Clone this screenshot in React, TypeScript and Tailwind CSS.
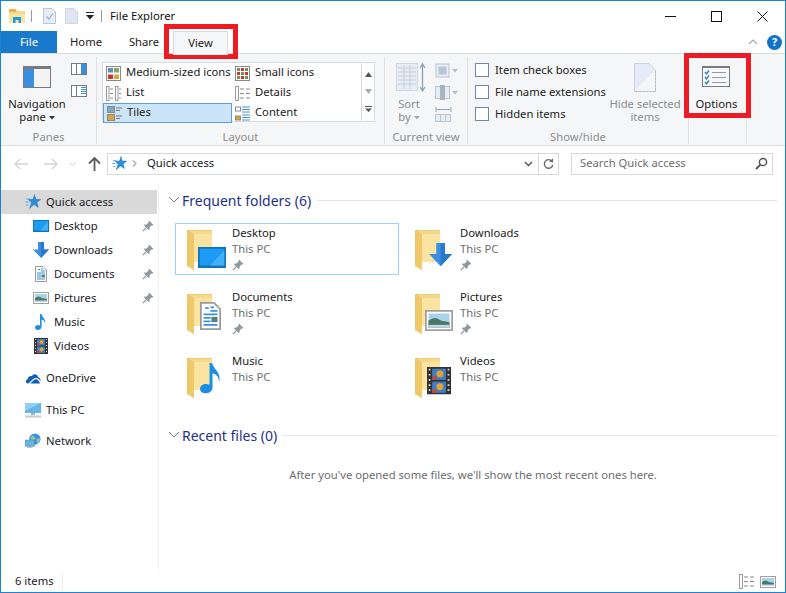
import React from "react";

const font = "[font-family:'Noto_Sans','Open_Sans',sans-serif]";

const Pin = () => (
  <svg width="12" height="12" viewBox="0 0 12 12">
    <path d="M7 0.5 L11.5 5 L10.5 5.6 L9.8 5.2 L7.6 7.4 L7.6 9.4 L6.6 10 L2 5.4 L2.6 4.4 L4.6 4.4 L6.8 2.2 L6.4 1.5 Z" fill="#8f979d" />
    <path d="M4 8 L0.8 11.2" stroke="#8f979d" strokeWidth="1.2" />
  </svg>
);

const Star = ({ s = 16 }: { s?: number }) => (
  <svg width={s} height={s} viewBox="0 0 16 16">
    <path d="M1 5 H5 M0 8 H3.5 M1 11 H3.5" stroke="#5aa9e6" strokeWidth="1" />
    <path d="M9.5 0.5 L11 5.3 L15.8 5.4 L12 8.4 L13.3 13.4 L9 10.6 L4.4 14.8 L6.4 8.8 L3.2 5.6 L8 5.3 Z" fill="#2b8fdc" stroke="#1b6fb5" strokeWidth="0.4" />
  </svg>
);

const DesktopIcon = () => (
  <svg width="16" height="12" viewBox="0 0 16 12">
    <rect x="0" y="0" width="16" height="12" fill="#0f74b8" />
    <rect x="1" y="1" width="14" height="9.5" fill="#1e9bf5" />
    <path d="M7 10.5 L15 2 V10.5 Z" fill="#46b0f7" />
  </svg>
);

const DownArrow = () => (
  <svg width="16" height="16" viewBox="0 0 16 16">
    <path d="M5 0 H11 V7.5 H16 L8 16 L0 7.5 H5 Z" fill="#3b8fe0" />
    <path d="M8 0 H11 V7.5 H16 L8 16 Z" fill="#2a78cc" />
  </svg>
);

const DocIcon = () => (
  <svg width="12" height="16" viewBox="0 0 12 16">
    <path d="M0.5 0.5 H8 L11.5 4 V15.5 H0.5 Z" fill="#fff" stroke="#9a9a9a" />
    <path d="M3 3.5 H5 M6 3 H8 M6 5 H10 M2 7 H10 M2 9 H6 M2 11 H6 M2 13 H10" stroke="#3a90dc" strokeWidth="1" />
    <rect x="6.5" y="8.5" width="3.5" height="3" fill="#5b7f7a" />
  </svg>
);

const PicIcon = () => (
  <svg width="16" height="12" viewBox="0 0 16 12">
    <rect x="0.5" y="0.5" width="15" height="11" fill="#fff" stroke="#a0a0a0" />
    <rect x="2" y="2" width="12" height="8" fill="#a9d3ec" />
    <path d="M2 6 Q6 3 9 6 L14 7 V10 H2 Z" fill="#4d7868" />
    <path d="M2 8.5 H14 V10 H2 Z" fill="#bcd8e6" />
  </svg>
);

const Note = ({ s = 16 }: { s?: number }) => (
  <svg width={s * 0.75} height={s} viewBox="0 0 12 16">
    <path d="M5 0 H6.4 C6.8 3 11.5 5 10 10 C10 7 8.5 6 6.6 5.4 V12.6 C6.6 14.8 4.8 16 3 16 C1.2 16 0 15 0 13.6 C0 12 1.6 11 3 11 C3.8 11 4.5 11.2 5 11.5 Z" fill="#1a8fe3" />
  </svg>
);

const Film = () => (
  <svg width="14" height="16" viewBox="0 0 14 16">
    <rect width="14" height="16" fill="#333" />
    <path d="M1 1.5 H2 M1 4.5 H2 M1 7.5 H2 M1 10.5 H2 M1 13.5 H2 M12 1.5 H13 M12 4.5 H13 M12 7.5 H13 M12 10.5 H13 M12 13.5 H13" stroke="#ddd" />
    <rect x="3" y="1" width="8" height="6.5" fill="#3c7fc8" />
    <rect x="3" y="8.5" width="8" height="6.5" fill="#3c7fc8" />
    <circle cx="7.5" cy="4" r="2" fill="#e8a22b" />
    <circle cx="7.5" cy="11.5" r="2" fill="#e8a22b" />
    <path d="M3 6 L5.5 5 V7.5 H3 Z M3 13.5 L5.5 12.5 V15 H3 Z" fill="#c9483a" />
  </svg>
);

const Cloud = () => (
  <svg width="16" height="11" viewBox="0 0 16 11">
    <path d="M3.5 10.5 C0.5 10.5 0 7 2.6 6.2 C3 3 6 2.4 7 3.2 C8 0.6 12.4 0.6 13 4.2 C15 4.6 16 6.6 15.4 8 C14.4 6 12 4.6 9.6 5.2 C7.4 5.8 6.4 8 3.5 10.5 Z" fill="#0f5fb8" />
    <path d="M5 10.5 C7 9.4 8 6.6 10.4 6.2 C12.4 6 14.4 7.6 15 10.5 Z" fill="#0f5fb8" />
  </svg>
);

const Monitor = () => (
  <svg width="16" height="15" viewBox="0 0 16 15">
    <rect x="0" y="0" width="16" height="10" fill="#64b5e8" />
    <path d="M0 0 H16 L0 8 Z" fill="#8fd0f3" />
    <rect x="6" y="10" width="4" height="2" fill="#9fb4c2" />
    <rect x="0" y="12.5" width="16" height="2" fill="#c4ccd2" />
  </svg>
);

const Globe = () => (
  <svg width="17" height="16" viewBox="0 0 17 16">
    <circle cx="10.5" cy="6" r="6" fill="#3f92dc" />
    <path d="M7 2 Q11 3 11 6 Q8 8 6 6 Z M12 6 L16 5 Q16 9 13 11 Z" fill="#8fc7a0" />
    <rect x="0" y="7" width="10" height="6.5" fill="#64b5e8" stroke="#5a7d99" strokeWidth="0.6" />
    <rect x="3.5" y="13.5" width="3" height="1" fill="#8096a5" />
    <rect x="2" y="14.5" width="6" height="1" fill="#b7c2ca" />
  </svg>
);

const NavRow = ({ icon, label, pin, active, child }: { icon: React.ReactNode; label: string; pin?: boolean; active?: boolean; child?: boolean }) => (
  <div className={`flex h-6 w-[156px] items-center ${active ? "bg-[#d9d9d9]" : ""} ${child ? "pl-[32px]" : "pl-[24px]"}`}>
    <div className="flex w-[16px] shrink-0 items-center justify-center">{icon}</div>
    <span className="ml-[5px] text-[#1a1a2a]">{label}</span>
    {pin && (
      <div className="mr-[3px] ml-auto">
        <Pin />
      </div>
    )}
  </div>
);

const Folder = ({ children }: { children?: React.ReactNode }) => (
  <div className="relative h-[40px] w-[40px] shrink-0">
    <svg width="26" height="40" viewBox="0 0 26 40">
      <path d="M0 0 H25 V32 H7 V40 L0 36 Z" fill="#f6d98a" />
      <path d="M7 4 H25 V32 H7 Z" fill="#fbe4a1" />
      <path d="M0 0 L7 4 V40 L0 36 Z" fill="#efc868" />
      <path d="M0 0 H25 V1 H1 V36 H0 Z" fill="#e7c873" />
    </svg>
    {/* overlay glyph */}
    <div className="absolute top-[14px] left-[10px]">{children}</div>
  </div>
);

const Tile = ({ title, pin, selected, overlay }: { title: string; pin?: boolean; selected?: boolean; overlay: React.ReactNode }) => (
  <div className={`flex h-[52px] w-[224px] items-start border pt-[6px] pl-[11px] ${selected ? "border-[#99d1ff]" : "border-transparent"}`}>
    <Folder>{overlay}</Folder>
    <div className="-mt-[5px] ml-[5px] flex flex-col leading-[16px]">
      <span className="text-[#1a1a1a]">{title}</span>
      <span className="text-[#6d6d6d]">This PC</span>
      {pin && (
        <div className="mt-[2px]">
          <Pin />
        </div>
      )}
    </div>
  </div>
);

const Section = ({ title }: { title: string }) => (
  <div className="flex h-[20px] items-center">
    <svg width="12" height="8" viewBox="0 0 12 8" className="ml-[7px]">
      <path d="M1 1 L6 6 L11 1" fill="none" stroke="#7a7a7a" />
    </svg>
    <span className="ml-[2px] text-[14px] text-[#1e3287]">{title}</span>
    <div className="mr-[8px] ml-[6px] h-px flex-1 bg-[#e3e3e3]" />
  </div>
);

const Thumb = ({ kind }: { kind: string }) => {
  if (kind === "medium")
    return (
      <svg width="15" height="15" viewBox="0 0 15 15">
        <rect x="0.5" y="0.5" width="14" height="14" fill="#fff" stroke="#8a8a8a" />
        <rect x="2" y="2" width="5" height="4.5" fill="#5b8fb8" />
        <rect x="8" y="2" width="5" height="4.5" fill="#7fa96a" />
        <rect x="2" y="8.5" width="5" height="4.5" fill="#c0392b" />
        <rect x="8" y="8.5" width="5" height="4.5" fill="#d9a441" />
      </svg>
    );
  if (kind === "small")
    return (
      <svg width="15" height="15" viewBox="0 0 15 15">
        <rect x="0.5" y="0.5" width="14" height="14" fill="#fff" stroke="#8a8a8a" />
        {[2, 6, 10].map((y) =>
          [2, 6, 10].map((x) => <rect key={`${x}-${y}`} x={x} y={y} width="3" height="3" fill={(x + y) % 8 === 0 ? "#c0392b" : "#7d8a60"} />)
        )}
      </svg>
    );
  if (kind === "list")
    return (
      <svg width="15" height="15" viewBox="0 0 15 15">
        <rect x="0.5" y="0.5" width="2.5" height="14" fill="#fff" stroke="#9a9a9a" />
        <rect x="9.5" y="0.5" width="2.5" height="14" fill="#fff" stroke="#9a9a9a" />
        <path d="M4 3 H7 M4 7.5 H7 M4 12 H7 M13 3 H15 M13 7.5 H15 M13 12 H15" stroke="#8a8a8a" />
      </svg>
    );
  if (kind === "details")
    return (
      <svg width="15" height="15" viewBox="0 0 15 15">
        <rect x="0.5" y="0.5" width="3" height="14" fill="#fff" stroke="#9a9a9a" />
        <path d="M5 3 H9 M11 3 H15 M5 7.5 H9 M11 7.5 H15 M5 12 H9 M11 12 H15" stroke="#8a8a8a" />
      </svg>
    );
  if (kind === "tiles")
    return (
      <svg width="16" height="15" viewBox="0 0 16 15">
        <rect x="0.5" y="0.5" width="7" height="6" fill="#7ba7c7" stroke="#8a8a8a" />
        <rect x="0.5" y="8.5" width="7" height="6" fill="#d9a441" stroke="#8a8a8a" />
        <path d="M9 2 H15 M9 4.5 H13 M9 10 H15 M9 12.5 H13" stroke="#777" />
      </svg>
    );
  return (
    <svg width="15" height="15" viewBox="0 0 15 15">
      <rect x="0.5" y="1" width="5" height="4" fill="#fff" stroke="#8a8a8a" />
      <rect x="0.5" y="10" width="5" height="4" fill="#d9a441" stroke="#8a8a8a" />
      <path d="M7 1 H15 M7 3.5 H15 M7 6 H15 M7 9 H15 M7 11.5 H15 M7 14 H15" stroke="#4a8fd0" />
    </svg>
  );
};

const GalleryItem = ({ kind, label, selected }: { kind: string; label: string; selected?: boolean }) => (
  <div className={`flex h-[20px] items-center pl-[2px] ${selected ? "border border-[#5f9fd8] bg-[#cce4f7]" : ""}`}>
    <div className="flex w-[17px] shrink-0 justify-center">
      <Thumb kind={kind} />
    </div>
    <span className="ml-[4px] pb-[2px] whitespace-nowrap text-[#222]">{label}</span>
  </div>
);

const Group = ({ w, label, children }: { w: string; label: string; children: React.ReactNode }) => (
  <div className={`flex h-full shrink-0 flex-col border-r border-[#e1e2e3] ${w}`}>
    <div className="relative flex-1">{children}</div>
    <div className="h-[18px] text-center leading-[22px] text-[#8d8d8d]">{label}</div>
  </div>
);

const Check = ({ label }: { label: string }) => (
  <div className="flex h-[14px] items-center">
    <div className="h-[14px] w-[14px] border border-[#6f86ad] bg-white" />
    <span className="ml-[6px] whitespace-nowrap text-[#222]">{label}</span>
  </div>
);

const Caret = ({ c = "#333" }: { c?: string }) => (
  <svg width="6" height="4" viewBox="0 0 6 4" className="ml-[3px] inline-block align-middle">
    <path d="M0 0 H6 L3 3.5 Z" fill={c} />
  </svg>
);

export default function App() {
  return (
    <div className={`relative flex h-[593px] w-[786px] flex-col overflow-hidden border border-[#1a84d8] bg-white text-[11.25px] ${font}`}>
      {/* title bar */}
      <div className="flex h-[30px] shrink-0 items-center">
        <div className="ml-[7px]">
          <svg width="18" height="16" viewBox="0 0 18 16">
            <path d="M1 1 H8 L10 3 H17 V15 H1 Z" fill="#f6d98a" />
            <path d="M1 1 H8 V4 H1 Z" fill="#e7b64e" />
            <rect x="1" y="6" width="16" height="9" fill="#fbe4a1" />
            <path d="M5 15 V9 H13 V15 H10.5 V12 H7.5 V15 Z" fill="#1d9be0" />
          </svg>
        </div>
        <div className="ml-[5px] h-[12px] w-px bg-[#9a9a9a]" />
        <div className="ml-[11px]">
          <svg width="13" height="16" viewBox="0 0 13 16">
            <path d="M0.5 0.5 H9 L12.5 4 V15.5 H0.5 Z" fill="#e6edf7" stroke="#b6c4d9" />
            <path d="M3.5 8.5 L6 11 L10 5.5" fill="none" stroke="#9aa9bd" strokeWidth="1.2" />
          </svg>
        </div>
        <div className="ml-[9px]">
          <svg width="13" height="16" viewBox="0 0 13 16">
            <path d="M0.5 0.5 H9 L12.5 4 V15.5 H0.5 Z" fill="#dfe6f2" stroke="#ccd6e6" />
          </svg>
        </div>
        <div className="ml-[8px]">
          <svg width="8" height="8" viewBox="0 0 8 8">
            <path d="M0 0 H8 V1 H0 Z M0 3 H8 L4 7.5 Z" fill="#222" />
          </svg>
        </div>
        <div className="ml-[7px] h-[12px] w-px bg-[#9a9a9a]" />
        <span className="ml-[8px] text-[#111]">File Explorer</span>
        <div className="mr-[17px] ml-auto flex items-center gap-[35px]">
          <svg width="11" height="11" viewBox="0 0 11 11">
            <path d="M0 5.5 H11" stroke="#111" />
          </svg>
          <svg width="11" height="11" viewBox="0 0 11 11">
            <rect x="0.5" y="0.5" width="10" height="10" fill="none" stroke="#111" />
          </svg>
          <svg width="11" height="11" viewBox="0 0 11 11">
            <path d="M0.5 0.5 L10.5 10.5 M10.5 0.5 L0.5 10.5" stroke="#111" />
          </svg>
        </div>
      </div>

      {/* tabs */}
      <div className="flex h-[23px] shrink-0 items-stretch border-b border-[#dadbdc]">
        <div className="flex w-[56px] items-center justify-center bg-[#1979ca] text-white">File</div>
        <div className="flex w-[58px] items-center justify-center text-[#222]">Home</div>
        <div className="flex w-[58px] items-center justify-center text-[#222]">Share</div>
        <div className="z-10 flex h-[24px] w-[55px] items-center justify-center border-x border-t border-[#dadbdc] bg-[#f5f6f7] text-[#222]">View</div>
        <div className="mr-[3px] ml-auto flex items-center gap-[9px]">
          <svg width="10" height="6" viewBox="0 0 10 6">
            <path d="M1 5 L5 1 L9 5" fill="none" stroke="#a8a8a8" strokeWidth="1.2" />
          </svg>
          <div className="flex h-[15px] w-[15px] items-center justify-center rounded-full bg-[#0f74c8] text-[11px] font-bold text-white">?</div>
        </div>
      </div>

      {/* ribbon */}
      <div className="flex h-[92px] shrink-0 border-b border-[#dadbdc] bg-[#f5f6f7] pt-[3px] pb-[1px]">
        <Group w="w-[96px]" label="Panes">
          <div className="absolute top-[9px] left-[22px]">
            <svg width="28" height="22" viewBox="0 0 28 22">
              <rect width="28" height="22" fill="#7a7a7a" />
              <rect x="1" y="3" width="26" height="18" fill="#f4f4f4" />
              <rect x="1" y="3" width="10" height="18" fill="#3b8fe0" />
            </svg>
          </div>
          <div className="absolute top-[40px] left-0 w-[72px] text-center leading-[13px] text-[#222]">
            Navigation
            <br />
            pane
            <Caret />
          </div>
          <div className="absolute top-[6px] left-[70px]">
            <svg width="16" height="12" viewBox="0 0 16 12">
              <rect x="0.5" y="0.5" width="15" height="11" fill="#fff" stroke="#7a7a7a" />
              <rect x="5" y="1" width="1" height="10" fill="#7a7a7a" />
              <rect x="10" y="1" width="5" height="10" fill="#3b8fe0" />
            </svg>
          </div>
          <div className="absolute top-[28px] left-[70px]">
            <svg width="16" height="12" viewBox="0 0 16 12">
              <rect x="0.5" y="0.5" width="15" height="11" fill="#fff" stroke="#7a7a7a" />
              <rect x="5" y="1" width="1" height="10" fill="#7a7a7a" />
              <path d="M10 2.5 H15 M10 4.5 H15 M10 6.5 H15 M10 8.5 H15" stroke="#3b8fe0" />
            </svg>
          </div>
        </Group>

        <Group w="w-[288px]" label="Layout">
          <div className="absolute top-[5px] left-[5px] flex h-[60px] w-[273px] border border-[#dadbdc] bg-white">
            <div className="grid w-[258px] grid-cols-[129px_129px] grid-rows-[20px_20px_20px]">
              <GalleryItem kind="medium" label="Medium-sized icons" />
              <GalleryItem kind="small" label="Small icons" />
              <GalleryItem kind="list" label="List" />
              <GalleryItem kind="details" label="Details" />
              <GalleryItem kind="tiles" label="Tiles" selected />
              <GalleryItem kind="content" label="Content" />
            </div>
            <div className="flex flex-1 flex-col items-center justify-around border-l border-[#dadbdc] py-[3px]">
              <svg width="7" height="5" viewBox="0 0 7 5"><path d="M0 5 L3.5 0 L7 5 Z" fill="#555" /></svg>
              <svg width="7" height="5" viewBox="0 0 7 5"><path d="M0 0 L3.5 5 L7 0 Z" fill="#aaa" /></svg>
              <svg width="7" height="6" viewBox="0 0 7 6"><path d="M0 0 H7 V1 H0 Z M0 2.5 H7 L3.5 6 Z" fill="#555" /></svg>
            </div>
          </div>
        </Group>

        <Group w="w-[83px]" label="Current view">
          <div className="absolute top-[6px] left-[11px]">
            <svg width="31" height="29" viewBox="0 0 31 29">
              <rect x="0.5" y="0.5" width="21" height="27" fill="#e8edf4" stroke="#cfd6e0" />
              <path d="M2 5 H20 M2 9 H20 M2 13 H20 M2 17 H20 M2 21 H20 M8 2 V26 M14 2 V26" stroke="#c3cfe0" />
              <path d="M26.5 2 V27 M24 5 L26.5 1 L29 5 M24 24 L26.5 28 L29 24" fill="none" stroke="#8ba0bd" strokeWidth="1.3" />
            </svg>
          </div>
          <div className="absolute top-[40px] left-[10px] w-[28px] text-center leading-[13px] text-[#8d8d8d]">
            Sort
            <br />
            by
            <Caret c="#aaa" />
          </div>
          <div className="absolute top-[6px] left-[50px] flex flex-col gap-[7px]">
            <svg width="23" height="15" viewBox="0 0 23 15">
              <rect x="1" y="1" width="13" height="13" fill="#e8edf4" stroke="#bcc5d2" />
              <rect x="3.5" y="3.5" width="8" height="8" fill="#b9c5d6" />
              <path d="M17 6 H23 L20 9.5 Z" fill="#bbb" />
            </svg>
            <svg width="23" height="15" viewBox="0 0 23 15">
              <rect x="0.5" y="1.5" width="14" height="12" fill="#e8edf4" stroke="#bcc5d2" />
              <rect x="5" y="0" width="5" height="15" fill="#a9b4c3" />
              <path d="M17 6 H23 L20 9.5 Z" fill="#bbb" />
            </svg>
            <svg width="17" height="15" viewBox="0 0 17 15">
              <path d="M1 0 V5 M16 0 V5 M2 2.5 H15" stroke="#8ba0bd" />
              <rect x="0.5" y="7.5" width="15" height="7" fill="#e8edf4" stroke="#bcc5d2" />
              <path d="M5.5 8 V14 M10.5 8 V14" stroke="#bcc5d2" />
            </svg>
          </div>
        </Group>

        <Group w="w-[221px]" label="Show/hide">
          <div className="absolute top-[6px] left-[7px] flex flex-col gap-[8px]">
            <Check label="Item check boxes" />
            <Check label="File name extensions" />
            <Check label="Hidden items" />
          </div>
          <div className="absolute top-[6px] left-[166px]">
            <svg width="22" height="29" viewBox="0 0 22 29">
              <path d="M0.5 0.5 H15 L21.5 7 V28.5 H0.5 Z" fill="#e4ecf8" stroke="#c6d2e4" />
              <path d="M1 28 L21 7 V28 Z" fill="#f5f6f7" />
              <path d="M21.5 8 V28.5 H1" fill="none" stroke="#b9b9b9" strokeDasharray="2 1.5" />
            </svg>
          </div>
          <div className="absolute top-[40px] left-[133px] w-[88px] text-center leading-[13px] text-[#8d8d8d]">
            Hide selected
            <br />
            items
          </div>
        </Group>

        <Group w="w-[58px]" label="">
          <div className="absolute top-[9px] left-[13px]">
            <svg width="28" height="21" viewBox="0 0 28 21">
              <rect x="0.5" y="0.5" width="27" height="20" fill="#f7f7f7" stroke="#7a7a7a" />
              <rect x="0" y="0" width="28" height="2" fill="#7a7a7a" />
              <path d="M3 6 L4.5 8 L7 4.5 M3 11 L4.5 13 L7 9.5 M3 16 L4.5 18 L7 14.5" fill="none" stroke="#2b7fd0" strokeWidth="1.3" />
              <path d="M10 6.5 H24 M10 11.5 H24 M10 16.5 H24" stroke="#9a9a9a" />
            </svg>
          </div>
          <div className="absolute top-[40px] -left-[1px] w-full text-center leading-[13px] text-[#222]">Options</div>
        </Group>
      </div>

      {/* address bar */}
      <div className="flex h-[38px] shrink-0 items-center pb-[3px]">
        <div className="ml-[13px] flex items-center">
          <svg width="14" height="12" viewBox="0 0 14 12">
            <path d="M6 1 L1 6 L6 11 M1 6 H14" fill="none" stroke="#d2d2d2" strokeWidth="1.4" />
          </svg>
          <svg width="14" height="12" viewBox="0 0 14 12" className="ml-[16px]">
            <path d="M8 1 L13 6 L8 11 M0 6 H13" fill="none" stroke="#d2d2d2" strokeWidth="1.4" />
          </svg>
          <svg width="7" height="4" viewBox="0 0 7 4" className="ml-[11px]">
            <path d="M0.5 0.5 L3.5 3.5 L6.5 0.5" fill="none" stroke="#d2d2d2" />
          </svg>
          <svg width="13" height="14" viewBox="0 0 13 14" className="ml-[12px]">
            <path d="M1 6.5 L6.5 1 L12 6.5 M6.5 1 V14" fill="none" stroke="#5a5a5a" strokeWidth="1.8" />
          </svg>
        </div>
        <div className="ml-[6px] flex h-[22px] w-[452px] items-center border border-[#d9d9d9]">
          <div className="ml-[4px]">
            <Star s={15} />
          </div>
          <svg width="5" height="7" viewBox="0 0 5 7" className="ml-[5px]">
            <path d="M1 0.5 L4 3.5 L1 6.5" fill="none" stroke="#666" />
          </svg>
          <span className="ml-[10px] text-[#1a1a1a]">Quick access</span>
          <div className="ml-auto flex h-full items-center">
            <svg width="9" height="6" viewBox="0 0 9 6" className="mr-[5px]">
              <path d="M1 1 L4.5 4.5 L8 1" fill="none" stroke="#555" strokeWidth="1.4" />
            </svg>
            <div className="flex h-full w-[20px] items-center justify-center border-l border-[#d9d9d9]">
              <svg width="11" height="12" viewBox="0 0 11 12">
                <path d="M8.8 3 A4.3 4.3 0 1 0 9.8 7" fill="none" stroke="#666" strokeWidth="1.3" />
                <path d="M6 3.4 L10 4.4 L10 0.4 Z" fill="#666" />
              </svg>
            </div>
          </div>
        </div>
        <div className="mr-[12px] ml-auto flex h-[22px] w-[202px] items-center border border-[#d9d9d9] pr-[4px] pl-[8px]">
          <span className="text-[#6d6d6d]">Search Quick access</span>
          <svg width="13" height="13" viewBox="0 0 13 13" className="ml-auto">
            <circle cx="8" cy="5" r="3.6" fill="none" stroke="#555" strokeWidth="1.5" />
            <path d="M5.4 7.6 L1 12" stroke="#555" strokeWidth="2" />
          </svg>
        </div>
      </div>

      {/* main */}
      <div className="flex min-h-0 flex-1">
        <div className="w-[158px] shrink-0 border-r border-[#f0f0f0] pt-[6px]">
          <NavRow icon={<Star />} label="Quick access" active />
          <NavRow child icon={<DesktopIcon />} label="Desktop" pin />
          <NavRow child icon={<DownArrow />} label="Downloads" pin />
          <NavRow child icon={<DocIcon />} label="Documents" pin />
          <NavRow child icon={<PicIcon />} label="Pictures" pin />
          <NavRow child icon={<Note />} label="Music" />
          <NavRow child icon={<Film />} label="Videos" />
          <div className="mt-[8px]">
            <NavRow icon={<Cloud />} label="OneDrive" />
          </div>
          <div className="mt-[8px]">
            <NavRow icon={<Monitor />} label="This PC" />
          </div>
          <div className="mt-[7px]">
            <NavRow icon={<Globe />} label="Network" />
          </div>
        </div>

        <div className="min-w-0 flex-1 pt-[6px] pl-[2px]">
          <Section title="Frequent folders (6)" />
          <div className="mt-[13px] ml-[14px] grid grid-cols-[224px_224px] gap-x-[4px] gap-y-[12px]">
            <Tile title="Desktop" pin selected overlay={<div className="mt-[3px] ml-[1px] origin-top-left scale-[1.75]"><DesktopIcon /></div>} />
            <Tile title="Downloads" pin overlay={<div className="-mt-[1px] ml-[4px] origin-top-left scale-[1.45]"><DownArrow /></div>} />
            <Tile title="Documents" pin overlay={<div className="-mt-[6px] ml-[3px] origin-top-left scale-[1.75]"><DocIcon /></div>} />
            <Tile title="Pictures" pin overlay={<div className="mt-[2px] origin-top-left scale-[1.75]"><PicIcon /></div>} />
            <Tile title="Music" overlay={<div className="-mt-[9px] ml-[3px] origin-top-left scale-[1.9]"><Note /></div>} />
            <Tile title="Videos" overlay={<div className="-mt-[5px] ml-[2px] origin-top-left scale-[1.72]"><Film /></div>} />
          </div>
          <div className="mt-[22px]">
            <Section title="Recent files (0)" />
          </div>
          <div className="mt-[22px] text-center text-[#6d6d6d]">After you've opened some files, we'll show the most recent ones here.</div>
        </div>
      </div>

      {/* status bar */}
      <div className="flex h-[22px] shrink-0 items-center pt-[1px]">
        <div className="flex h-[18px] w-[62px] items-center border-r border-[#ececec] pl-[14px] text-[#1a1a2a]">6 items</div>
        <div className="mr-[9px] ml-auto flex items-center gap-[6px]">
          <Thumb kind="details" />
          <PicIcon />
        </div>
      </div>

      {/* red highlight boxes */}
      <div className="pointer-events-none absolute top-[23px] left-[163px] h-[35px] w-[74px] border-[5px] border-[#ed1c24]" />
      <div className="pointer-events-none absolute top-[52px] left-[683px] h-[65px] w-[67px] border-[5px] border-[#ed1c24]" />
    </div>
  );
}
